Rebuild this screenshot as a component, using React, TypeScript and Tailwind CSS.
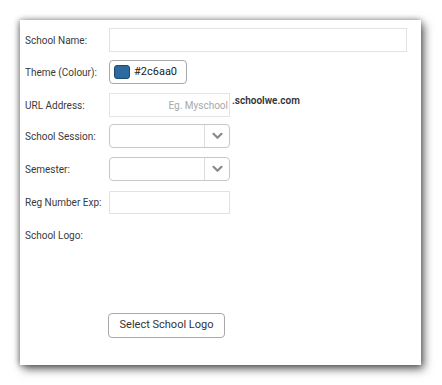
import { useState } from "react";

const labelCls =
  "w-[84px] shrink-0 text-[10px] text-[#3a3a3a] font-['Roboto',sans-serif]";

function Row({
  label,
  children,
  className = "",
}: {
  label: string;
  children?: React.ReactNode;
  className?: string;
}) {
  return (
    <div className={`flex items-center h-[24px] ${className}`}>
      <div className={labelCls}>{label}</div>
      {children}
    </div>
  );
}

function Chevron() {
  return (
    <svg width="11" height="8" viewBox="0 0 11 8" fill="none">
      <path
        d="M1.5 1.8 L5.5 5.8 L9.5 1.8"
        stroke="#8a8a8a"
        strokeWidth="2.2"
        strokeLinecap="round"
        strokeLinejoin="round"
      />
    </svg>
  );
}

function SelectBox() {
  return (
    <div className="flex h-[24px] w-[121px] rounded-[4px] border border-[#c8c8c8] bg-white">
      <div className="flex-1" />
      <div className="flex w-[25px] items-center justify-center border-l border-[#dcdcdc]">
        <Chevron />
      </div>
    </div>
  );
}

export default function App() {
  const [color] = useState("#2c6aa0");

  return (
    <div className="h-[385px] w-[442px] bg-white p-[20px] font-['Roboto',sans-serif]">
      <div className="h-[345px] w-[401px] bg-white pl-[5px] pt-[8px] shadow-[3px_4px_9px_rgba(0,0,0,0.6),-1px_0_6px_rgba(0,0,0,0.4)]">
        <Row label="School Name:">
          <div className="h-[24px] w-[298px] border border-[#e2e2e2]" />
        </Row>

        <Row label="Theme (Colour):" className="mt-[8px]">
          <div className="flex h-[24px] w-[78px] items-center gap-[4px] rounded-[4px] border border-[#a8a8a8] pl-[4px]">
            <span
              className="h-[14px] w-[16px] rounded-[3px] border border-[#1d4a72]"
              style={{ backgroundColor: color }}
            />
            <span className="text-[11px] text-[#222]">{color}</span>
          </div>
        </Row>

        <div className="mt-[9px] flex h-[24px] items-start">
          <div className={`${labelCls} self-center`}>URL Address:</div>
          <div className="flex h-[24px] w-[121px] items-center justify-end overflow-hidden border border-[#e4e4e4] pr-[1px]">
            <span className="whitespace-nowrap text-[10px] text-[#a8a8a8]">
              Eg. Myschool
            </span>
          </div>
          <span className="ml-[2px] text-[10px] font-semibold text-[#333]">
            .schoolwe.com
          </span>
        </div>

        <Row label="School Session:" className="mt-[7px]">
          <SelectBox />
        </Row>

        <Row label="Semester:" className="mt-[9px]">
          <SelectBox />
        </Row>

        <Row label="Reg Number Exp:" className="mt-[9px]">
          <div className="h-[23px] w-[121px] border border-[#e2e2e2]" />
        </Row>

        <Row label="School Logo:" className="mt-[9px]" />

        <div className="ml-[83px] mt-[64px]">
          <button
            type="button"
            className="h-[25px] w-[117px] rounded-[4px] border border-[#a8a8a8] bg-white text-[11px] text-[#333]"
          >
            Select School Logo
          </button>
        </div>
      </div>
    </div>
  );
}
